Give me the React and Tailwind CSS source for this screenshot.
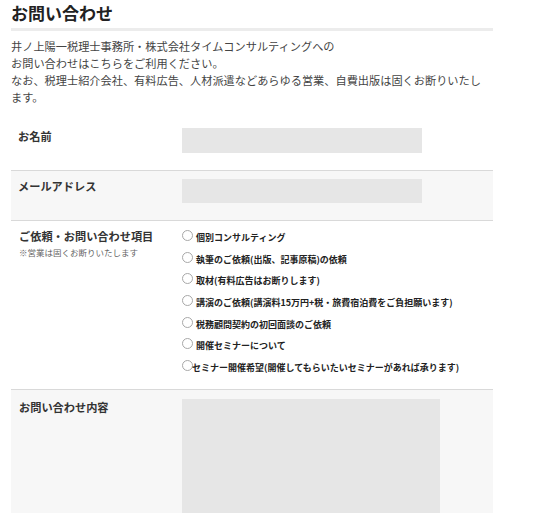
import React from 'react';

const options = [
  { label: '個別コンサルティング', gap: true },
  { label: '執筆のご依頼(出版、記事原稿)の依頼', gap: true },
  { label: '取材(有料広告はお断りします)', gap: true },
  { label: '講演のご依頼(講演料15万円+税・旅費宿泊費をご負担願います)', gap: true },
  { label: '税務顧問契約の初回面談のご依頼', gap: true },
  { label: '開催セミナーについて', gap: true },
  { label: 'セミナー開催希望(開催してもらいたいセミナーがあれば承ります)', gap: false },
];

const Radio = ({ label, gap }) => (
  <label className="flex items-start h-[21.7px]">
    <span className="mt-[-1px] w-[11px] h-[11px] shrink-0 rounded-full border border-[#a8a8a8] bg-white"></span>
    <span className={`${gap ? 'ml-[3px]' : 'ml-[-1px]'} text-[9px] font-bold leading-[13px] text-[#222] whitespace-nowrap`}>
      {label}
    </span>
  </label>
);

const App = () => {
  return (
    <div className="min-h-[513px] bg-white font-['Noto_Sans_CJK_JP','Noto_Sans',sans-serif] text-[#333]">
      <div className="w-[482px] ml-[11px]">
        <h1 className="h-[31px] text-[17px] leading-[26px] font-bold text-[#222] border-b-[3px] border-[#ececec]">
          お問い合わせ
        </h1>

        <p className="mt-[7px] text-[11.2px] leading-[17px] text-[#444]">
          井ノ上陽一税理士事務所・株式会社タイムコンサルティングへの
          <br />
          お問い合わせはこちらをご利用ください。
          <br />
          なお、税理士紹介会社、有料広告、人材派遣などあらゆる営業、自費出版は固くお断りいたし
          <br />
          ます。
        </p>

        <div className="mt-[12px]">
          <div className="grid grid-cols-[171px_1fr] pt-[10px] pb-[17px]">
            <div className="pl-[7px] text-[11.2px] leading-[16px] font-bold text-[#333]">お名前</div>
            <div className="w-[240px] h-[25px] bg-[#e6e6e6]"></div>
          </div>

          <div className="grid grid-cols-[171px_1fr] border-t border-[#d9d9d9] bg-[#f7f7f7] pt-[8px] pb-[17px]">
            <div className="pl-[7px] mt-[-1px] text-[11.2px] leading-[16px] font-bold text-[#333]">メールアドレス</div>
            <div className="w-[240px] h-[24px] bg-[#e6e6e6]"></div>
          </div>

          <div className="grid grid-cols-[171px_1fr] border-t border-[#d9d9d9] pt-[7px] pb-[6px]">
            <div className="pl-[8px]">
              <div className="text-[11.2px] leading-[16px] font-bold text-[#333]">ご依頼・お問い合わせ項目</div>
              <div className="text-[8.5px] leading-[16px] text-[#666]">※営業は固くお断りいたします</div>
            </div>
            <div className="flex flex-col pt-[3px]">
              {options.map((o) => (
                <Radio key={o.label} label={o.label} gap={o.gap} />
              ))}
            </div>
          </div>

          <div className="grid grid-cols-[171px_1fr] border-t border-[#d9d9d9] bg-[#f7f7f7] pt-[9px] pb-[20px]">
            <div className="pl-[8px] text-[11.2px] leading-[16px] font-bold text-[#333]">お問い合わせ内容</div>
            <div className="w-[258px] h-[150px] bg-[#e6e6e6]"></div>
          </div>
        </div>
      </div>
    </div>
  );
};

export default App;
